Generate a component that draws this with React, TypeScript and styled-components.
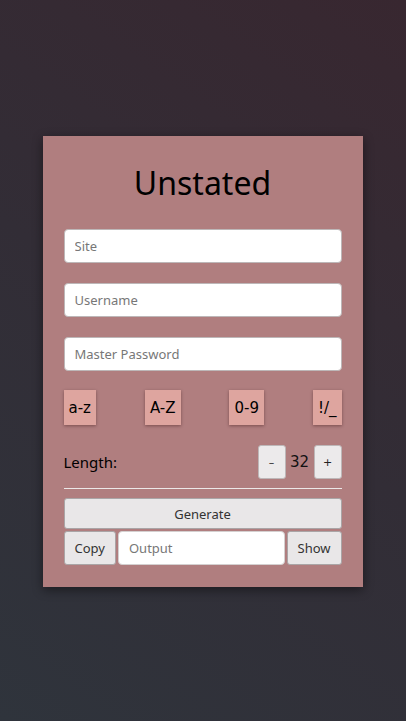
import React from "react";
import styled, { createGlobalStyle } from "styled-components";

const Global = createGlobalStyle`
  html, body { margin: 0; padding: 0; height: 100%; }
  body {
    font-family: "Noto Sans", "Open Sans", sans-serif;
    background: linear-gradient(35deg, #2f343c 0%, #322d36 50%, #382730 100%);
    min-height: 721px;
  }
  * { box-sizing: border-box; }
`;

const Page = styled.div`
  display: flex;
  justify-content: center;
  align-items: flex-start;
  padding-top: 136px;
  min-height: 721px;
`;

const Card = styled.div`
  width: 320px;
  margin-left: -1px;
  background: #b07e7f;
  padding: 25px 21px 22px;
  box-shadow: 0 3px 10px rgba(0, 0, 0, 0.45);
  display: flex;
  flex-direction: column;
`;

const Title = styled.h1`
  margin: 0 0 24px;
  font-weight: 400;
  font-size: 32px;
  line-height: 44px;
  text-align: center;
  color: #000;
`;

const Field = styled.input`
  height: 34px;
  width: 100%;
  border: 1px solid #bdb7b8;
  border-radius: 4px;
  background: #fff;
  padding: 0 10px;
  font-family: inherit;
  font-size: 13px;
  color: #333;
  margin-bottom: ${(p: { $mb?: number }) => p.$mb ?? 20}px;
  &::placeholder { color: #777; }
`;

const Toggles = styled.div`
  display: flex;
  justify-content: space-between;
  margin-bottom: 20px;
`;

const Toggle = styled.button`
  height: 35px;
  padding: 0 5px;
  border: none;
  background: #dea59f;
  box-shadow: 0 1px 3px rgba(60, 20, 20, 0.45);
  font-family: "DejaVu Sans", sans-serif;
  font-size: 15px;
  color: #000;
`;

const LengthRow = styled.div`
  display: flex;
  align-items: center;
  justify-content: space-between;
  margin-bottom: 9px;
`;

const Label = styled.span`
  font-size: 15px;
  color: #000;
`;

const Stepper = styled.div`
  display: flex;
  align-items: center;
  gap: 4px;
`;

const StepBtn = styled.button`
  width: 28px;
  height: 34px;
  border: 1px solid #bdb7b8;
  border-radius: 3px;
  background: #eceaeb;
  font-family: "DejaVu Sans", sans-serif;
  font-size: 11px;
  color: #222;
  padding: 0;
`;

const Count = styled.span`
  font-family: "DejaVu Sans", sans-serif;
  font-size: 15px;
  color: #111;
  width: 20px;
  text-align: center;
`;

const Rule = styled.hr`
  margin: 0 0 9px;
  border: none;
  border-top: 1px solid #ece8e8;
  height: 0;
`;

const GreyBtn = styled.button`
  height: ${(p: { $h?: number }) => p.$h ?? 33}px;
  border: 1px solid #aaa5a6;
  border-radius: 3px;
  background: #e9e7e8;
  font-family: inherit;
  font-size: 13px;
  color: #333;
  padding: 0 10px;
`;

const Generate = styled(GreyBtn)`
  width: 100%;
  margin-bottom: 2px;
`;

const OutputRow = styled.div`
  display: flex;
  gap: 2px;
`;

const OutputField = styled(Field)`
  flex: 1;
  min-width: 0;
  height: 34px;
  border-color: #d4d0d0;
`;

export default function App() {
  return (
    <>
      <Global />
      <Page>
        <Card>
          <Title>Unstated</Title>
          <Field placeholder="Site" />
          <Field placeholder="Username" />
          <Field placeholder="Master Password" $mb={19} />
          <Toggles>
            <Toggle>a-z</Toggle>
            <Toggle>A-Z</Toggle>
            <Toggle>0-9</Toggle>
            <Toggle>!/_</Toggle>
          </Toggles>
          <LengthRow>
            <Label>Length:</Label>
            <Stepper>
              <StepBtn>–</StepBtn>
              <Count>32</Count>
              <StepBtn>+</StepBtn>
            </Stepper>
          </LengthRow>
          <Rule />
          <Generate $h={31}>Generate</Generate>
          <OutputRow>
            <GreyBtn $h={34}>Copy</GreyBtn>
            <OutputField placeholder="Output" $mb={0} />
            <GreyBtn $h={34}>Show</GreyBtn>
          </OutputRow>
        </Card>
      </Page>
    </>
  );
}
